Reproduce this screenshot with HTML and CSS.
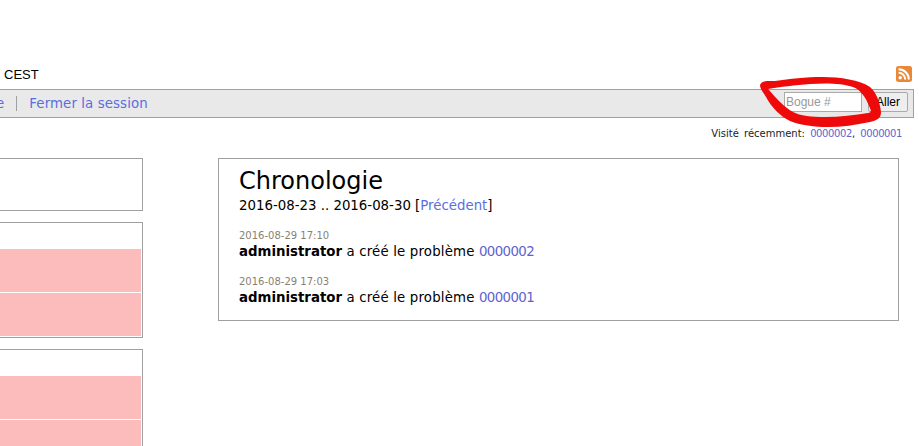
FILE: index.html
```html
<!DOCTYPE html>
<html lang="fr">
<head>
    <meta charset="UTF-8">
    <title>Chronologie</title>
    <link rel="stylesheet" href="styles.css">
</head>
<body>
    <div class="login-info">
        <span class="timezone">CEST</span>
        <svg class="rss" width="16" height="16" viewBox="0 0 16 16">
            <rect width="16" height="16" rx="2.5" fill="#e8893a"/>
            <circle cx="4.2" cy="11.8" r="1.7" fill="#fff"/>
            <path d="M2.6 6.8a6.6 6.6 0 0 1 6.6 6.6M2.6 3.2a10.2 10.2 0 0 1 10.2 10.2" fill="none" stroke="#fff" stroke-width="2"/>
        </svg>
    </div>

    <div class="menu">
        <div class="menu-links">
            <a class="menu-cut" href="#">e</a>
            <a class="menu-link" href="#">Fermer la session</a>
        </div>
        <form class="jump">
            <input class="jump-input" type="text" placeholder="Bogue #">
            <button class="jump-btn" type="button">Aller</button>
        </form>
    </div>

    <div class="recent">Visité récemment: <a href="#">0000002</a>, <a href="#">0000001</a></div>

    <div class="main">
        <div class="side">
            <div class="box box-empty"></div>
            <div class="box box-list">
                <div class="row"></div>
                <div class="row"></div>
            </div>
            <div class="box box-list box-last">
                <div class="row"></div>
                <div class="row"></div>
            </div>
        </div>

        <div class="timeline">
            <h1>Chronologie</h1>
            <p class="range">2016-08-23 .. 2016-08-30 [<a href="#">Précédent</a>]</p>
            <div class="entry">
                <div class="date">2016-08-29 17:10</div>
                <div class="action"><b>administrator</b> a créé le problème <a class="issue" href="#">0000002</a></div>
            </div>
            <div class="entry">
                <div class="date">2016-08-29 17:03</div>
                <div class="action"><b>administrator</b> a créé le problème <a class="issue" href="#">0000001</a></div>
            </div>
        </div>
    </div>

    <!-- trait rouge dessiné par-dessus la capture -->
    <svg class="scribble" width="919" height="446" viewBox="0 0 919 446">
        <path fill="#ee0a0a" fill-rule="evenodd" d="M760 85C762 80 768 81 775 81C790 79 805 77 823 77C840 77 860 80 870 87C877 93 880 103 881 112C881 118 878 120 870 122C855 125 842 127 828 127C815 127 800 125 790 121C780 116 772 108 766 97C763 92 760 89 760 85ZM768 89C780 87 795 85 810 84C825 83 842 83 853 87C861 90 866 98 869 106C871 110 872 112 868 113C855 115 840 117 825 117C812 117 800 116 793 112C784 107 776 98 768 89Z"/>
    </svg>
</body>
</html>
```

FILE: styles.css
```css
html, body {
    height: 100%;
}

body {
    margin: 0;
    position: relative;
    overflow: hidden;
    font-family: "DejaVu Sans", Verdana, sans-serif;
    font-size: 13.33px;
    color: #000;
    background-color: #fff;
}

a {
    color: #5a6ee0;
    text-decoration: none;
}

.login-info {
    display: flex;
    justify-content: space-between;
    align-items: center;
    height: 18px;
    margin-top: 65px;
    padding: 0 7px 0 4px;
    font-size: 13px;
}

.timezone {
    font-family: "Liberation Sans", Arial, sans-serif;
}

.menu {
    display: flex;
    justify-content: space-between;
    align-items: center;
    box-sizing: border-box;
    height: 29px;
    margin: 6px 5px 0 -10px;
    padding-right: 5px;
    background-color: #e9e9e9;
    border: 1px solid #a0a0a0;
}

.menu-links {
    display: flex;
    align-items: center;
    letter-spacing: 0.1px;
}

.menu-cut {
    margin-left: 5px;
    padding-right: 12px;
    border-right: 1px solid #a0a0a0;
}

.menu-link {
    margin-left: 12px;
}

.jump {
    display: flex;
    align-items: center;
    gap: 6px;
    padding-bottom: 3px;
}

.jump-input {
    box-sizing: border-box;
    width: 78px;
    height: 20px;
    padding: 0 1px;
    font-family: "Liberation Sans", Arial, sans-serif;
    font-size: 12px;
    background-color: #fff;
    border: 1px solid #aaa;
}

.jump-input::placeholder {
    color: #999;
}

.jump-btn {
    width: 40px;
    height: 20px;
    padding: 0;
    font-family: "Liberation Sans", Arial, sans-serif;
    font-size: 12px;
    color: #000;
    background-color: #eee;
    border: 1px solid #aaa;
    border-radius: 2px;
}

.recent {
    margin-top: 9px;
    padding-right: 17px;
    font-size: 10px;
    line-height: 14px;
    text-align: right;
    word-spacing: 2px;
    color: #222;
}

.recent a {
    color: #5f63cf;
    letter-spacing: -0.4px;
}

.main {
    display: flex;
    gap: 75px;
    height: 289px;
    margin-top: 17px;
    margin-left: -10px;
    overflow: hidden;
}

.side {
    flex: 0 0 153px;
}

.box {
    box-sizing: border-box;
    margin-bottom: 11px;
    background-color: #fff;
    border: 1px solid #a0a0a0;
}

.box-empty {
    height: 53px;
}

.box-list {
    height: 116px;
    padding: 26px 1px 1px 0;
}

.box-last {
    height: 130px;
}

.row {
    height: 43px;
    margin-bottom: 1px;
    background-color: #fdbcbc;
}

.timeline {
    box-sizing: border-box;
    width: 681px;
    height: 163px;
    padding: 8px 20px;
    border: 1px solid #a0a0a0;
}

h1 {
    margin: 0;
    font-size: 24px;
    font-weight: normal;
    line-height: 29px;
}

.range {
    margin: 2px 0 0;
    line-height: 16px;
}

.entry {
    margin-top: 13px;
}

.range + .entry {
    margin-top: 14px;
}

.date {
    font-size: 10px;
    line-height: 15px;
    color: #8a7f72;
}

.action {
    line-height: 18px;
    letter-spacing: 0.17px;
}

.action b {
    letter-spacing: 0;
}

.issue {
    color: #5f63cf;
    letter-spacing: -0.6px;
}

.scribble {
    position: absolute;
    top: 0;
    left: 0;
    pointer-events: none;
}
```
